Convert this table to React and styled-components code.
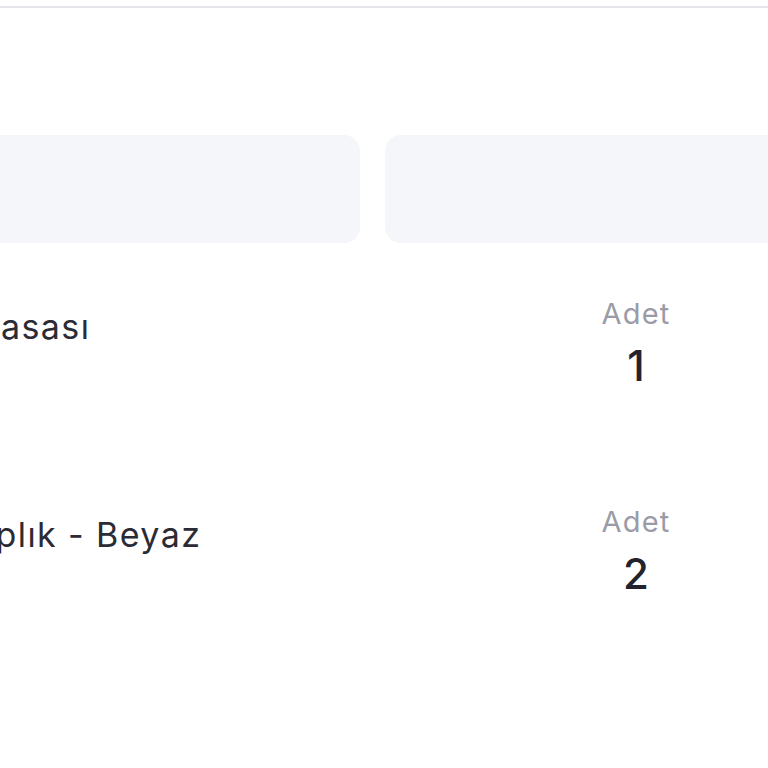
import styled, { createGlobalStyle } from "styled-components";

const GlobalStyle = createGlobalStyle`
  html, body {
    margin: 0;
    padding: 0;
    background: #ffffff;
    overflow: hidden;
  }
  body {
    font-family: Inter, "Noto Sans", sans-serif;
  }
`;

const Page = styled.div`
  width: 768px;
  height: 768px;
  overflow: hidden;
  background: #ffffff;
`;

const TopRule = styled.div`
  margin-top: 6px;
  height: 2px;
  background: #e6e6ea;
`;

const Inner = styled.div`
  margin-left: -72px;
  width: 900px;
`;

const Tabs = styled.div`
  display: grid;
  grid-template-columns: 432px 432px;
  gap: 25px;
  margin-top: 127px;
`;

const Tab = styled.div`
  height: 108px;
  border-radius: 16px;
  background: #f5f6fa;
`;

const List = styled.div`
  display: flex;
  flex-direction: column;
  gap: 104px;
  margin-top: 55px;
`;

const Row = styled.div`
  display: grid;
  grid-template-columns: 671px 74px;
  align-items: start;
  height: 104px;
`;

const Name = styled.div`
  font-size: 34px;
  letter-spacing: 1.4px;
  color: #2b2b36;
  padding-top: 8px;
  white-space: nowrap;
`;

const Qty = styled.div`
  display: flex;
  flex-direction: column;
  align-items: center;
`;

const QtyLabel = styled.div`
  font-size: 29px;
  color: #9b9ba8;
  line-height: 32px;
  letter-spacing: 1.2px;
`;

const QtyValue = styled.div`
  font-size: 42px;
  font-weight: 500;
  color: #23232d;
  line-height: 46px;
  margin-top: 13px;
`;

const items = [
  { name: "İş Masası", qty: 1 },
  { name: "Kitaplık - Beyaz", qty: 2 },
];

export default function App() {
  return (
    <Page>
      <GlobalStyle />
      <TopRule />
      <Inner>
        <Tabs>
          <Tab />
          <Tab />
        </Tabs>
        <List>
          {items.map((it) => (
            <Row key={it.name}>
              <Name>{it.name}</Name>
              <Qty>
                <QtyLabel>Adet</QtyLabel>
                <QtyValue>{it.qty}</QtyValue>
              </Qty>
            </Row>
          ))}
        </List>
      </Inner>
    </Page>
  );
}
